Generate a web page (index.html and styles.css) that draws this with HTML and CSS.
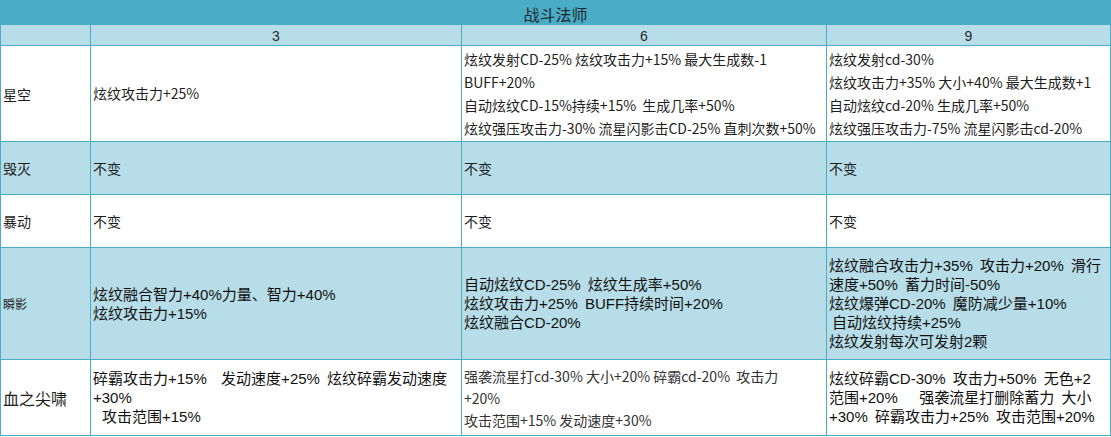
FILE: index.html
```html
<!DOCTYPE html>
<html lang="zh-CN">
<head>
<meta charset="utf-8">
<title>战斗法师</title>
<link rel="stylesheet" href="styles.css">
</head>
<body>
<table class="grid">
  <colgroup>
    <col class="c1"><col class="c2"><col class="c3"><col class="c4">
  </colgroup>
  <tr class="r-title"><th colspan="4" class="title">战斗法师</th></tr>
  <tr class="r-head blue">
    <td></td><td class="num">3</td><td class="num">6</td><td class="num">9</td>
  </tr>
  <tr class="r-star">
    <td class="label">星空</td>
    <td class="yh"><div>炫纹攻击力+25%</div></td>
    <td class="yh">
      <div>炫纹发射CD-25% 炫纹攻击力+15% 最大生成数-1</div>
      <div>BUFF+20%</div>
      <div>自动炫纹CD-15%持续+15%&nbsp; 生成几率+50%</div>
      <div>炫纹强压攻击力-30% 流星闪影击CD-25% 直刺次数+50%</div>
    </td>
    <td class="yh">
      <div>炫纹发射cd-30%</div>
      <div>炫纹攻击力+35% 大小+40% 最大生成数+1</div>
      <div>自动炫纹cd-20% 生成几率+50%</div>
      <div>炫纹强压攻击力-75% 流星闪影击cd-20%</div>
    </td>
  </tr>
  <tr class="r-mid blue">
    <td class="label">毁灭</td>
    <td class="yh">不变</td><td class="yh">不变</td><td class="yh">不变</td>
  </tr>
  <tr class="r-mid">
    <td class="label">暴动</td>
    <td class="yh">不变</td><td class="yh">不变</td><td class="yh">不变</td>
  </tr>
  <tr class="r-shun blue">
    <td class="label small">瞬影</td>
    <td class="song">
      <div>炫纹融合智力+40%力量、智力+40%</div>
      <div>炫纹攻击力+15%</div>
    </td>
    <td class="song">
      <div>自动炫纹CD-25% 炫纹生成率+50%</div>
      <div>炫纹攻击力+25% BUFF持续时间+20%</div>
      <div>炫纹融合CD-20%</div>
    </td>
    <td class="song">
      <div>炫纹融合攻击力+35% 攻击力+20% 滑行</div>
      <div>速度+50% 蓄力时间-50%</div>
      <div>炫纹爆弹CD-20% 魔防减少量+10%</div>
      <div class="indent">自动炫纹持续+25%</div>
      <div>炫纹发射每次可发射2颗</div>
    </td>
  </tr>
  <tr class="r-blood">
    <td class="label big">血之尖啸</td>
    <td class="song">
      <div>碎霸攻击力+15%&nbsp; 发动速度+25% 炫纹碎霸发动速度</div>
      <div>+30%</div>
      <div class="indent-2">攻击范围+15%</div>
    </td>
    <td class="yh tight">
      <div>强袭流星打cd-30% 大小+20% 碎霸cd-20%&nbsp; 攻击力</div>
      <div>+20%</div>
      <div>攻击范围+15% 发动速度+30%</div>
    </td>
    <td class="song">
      <div>炫纹碎霸CD-30% 攻击力+50% 无色+2</div>
      <div>范围+20%&nbsp;&nbsp; 强袭流星打删除蓄力 大小</div>
      <div>+30% 碎霸攻击力+25% 攻击范围+20%</div>
    </td>
  </tr>
</table>
</body>
</html>
```

FILE: styles.css
```css
html, body {
  margin: 0;
  padding: 0;
  background: #ffffff;
}

.grid {
  border-collapse: collapse;
  table-layout: fixed;
  width: 1110px;
  font-family: "Noto Sans CJK SC", "Liberation Sans", sans-serif;
  color: #1e1e1e;
}

.c1 { width: 90px; }
.c2 { width: 371px; }
.c3 { width: 365px; }
.c4 { width: 284px; }

.grid th,
.grid td {
  border: 1px solid #4bacc6;
  padding: 0 2px;
  vertical-align: middle;
  text-align: left;
  white-space: nowrap;
  overflow: hidden;
}

.r-title { height: 24px; }
.r-head { height: 20px; }
.r-star { height: 96px; }
.r-mid { height: 53px; }
.r-shun { height: 112px; }
.r-blood { height: 76px; }

.grid .title {
  background: #4bacc6;
  font-weight: normal;
  font-size: 16px;
  line-height: 18px;
  text-align: center;
  padding-top: 3px;
  color: #1d2a30;
}

.blue td { background: #b7dde8; }

.grid .num {
  text-align: center;
  font-family: "Liberation Sans", sans-serif;
  font-size: 14px;
  line-height: 18px;
  padding-top: 2px;
  color: #2a2a2a;
}

.label {
  font-size: 14px;
  line-height: 18px;
}

.label.small {
  font-size: 12px;
}

.label.big {
  font-size: 16px;
}

.yh {
  font-size: 14px;
  line-height: 23px;
}

.yh.tight {
  line-height: 22px;
  font-size: 14px;
  color: #333333;
}

.song {
  font-family: "Liberation Sans", "Noto Sans CJK SC", sans-serif;
  font-size: 15px;
  line-height: 19px;
  word-spacing: 3px;
  color: #111111;
}

.indent {
  padding-left: 3px;
}

.indent-2 {
  padding-left: 9px;
}
```
